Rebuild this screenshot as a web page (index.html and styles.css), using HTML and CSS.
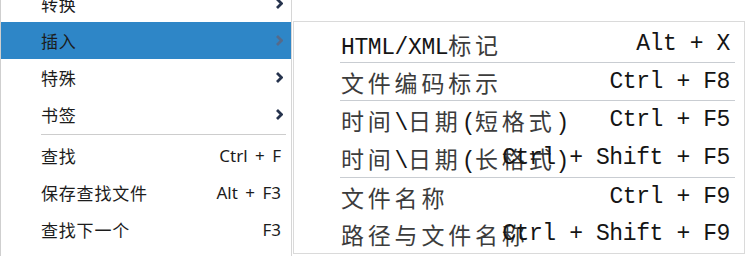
FILE: index.html
```html
<!DOCTYPE html>
<html lang="zh-CN">
<head>
    <meta charset="UTF-8">
    <title>菜单</title>
    <link rel="stylesheet" href="styles.css">
</head>
<body>

<ul class="menu">
    <li class="item">
        <span class="label"><span class="han">转换</span></span>
        <svg class="arrow" viewBox="0 0 7 11"><path d="M1 1 L5.5 5.5 L1 10"/></svg>
    </li>
    <li class="item active">
        <span class="label"><span class="han">插入</span></span>
        <svg class="arrow" viewBox="0 0 7 11"><path d="M1 1 L5.5 5.5 L1 10"/></svg>
    </li>
    <li class="item">
        <span class="label"><span class="han">特殊</span></span>
        <svg class="arrow" viewBox="0 0 7 11"><path d="M1 1 L5.5 5.5 L1 10"/></svg>
    </li>
    <li class="item">
        <span class="label"><span class="han">书签</span></span>
        <svg class="arrow" viewBox="0 0 7 11"><path d="M1 1 L5.5 5.5 L1 10"/></svg>
    </li>
    <li class="divider"></li>
    <li class="item">
        <span class="label"><span class="han">查找</span></span>
        <span class="shortcut">Ctrl + F</span>
    </li>
    <li class="item">
        <span class="label"><span class="han">保存查找文件</span></span>
        <span class="shortcut">Alt + F3</span>
    </li>
    <li class="item">
        <span class="label"><span class="han">查找下一个</span></span>
        <span class="shortcut">F3</span>
    </li>
</ul>

<!-- submenu for 插入 -->
<ul class="submenu">
    <li class="sub-item sep">
        <span class="sub-label">HTML/XML<span class="han">标记</span></span>
        <span class="sub-key">Alt + X</span>
    </li>
    <li class="sub-item sep">
        <span class="sub-label"><span class="han">文件编码标示</span></span>
        <span class="sub-key">Ctrl + F8</span>
    </li>
    <li class="sub-item">
        <span class="sub-label"><span class="han">时间</span>\<span class="han">日期</span>(<span class="han">短格式</span>)</span>
        <span class="sub-key">Ctrl + F5</span>
    </li>
    <li class="sub-item sep">
        <span class="sub-label"><span class="han">时间</span>\<span class="han">日期</span>(<span class="han">长格式</span>)</span>
        <span class="sub-key">Ctrl + Shift + F5</span>
    </li>
    <li class="sub-item">
        <span class="sub-label"><span class="han">文件名称</span></span>
        <span class="sub-key">Ctrl + F9</span>
    </li>
    <li class="sub-item">
        <span class="sub-label"><span class="han">路径与文件名称</span></span>
        <span class="sub-key">Ctrl + Shift + F9</span>
    </li>
</ul>

</body>
</html>
```

FILE: styles.css
```css
/* menu styles */
body {
    margin: 0;
    width: 748px;
    height: 256px;
    overflow: hidden;
    position: relative;
    background-color: #fff;
}

ul {
    list-style: none;
    margin: 0;
    padding: 0;
}

.menu {
    width: 290px;
    height: 280px;
    margin-top: -15px;
    border-left: 1px solid #cfcfcf;
    border-right: 1px solid #d6d6d6;
    font-family: "Noto Sans", "Noto Sans CJK SC", sans-serif;
    font-size: 17px;
    color: #1c1c1c;
}

.menu .item {
    display: flex;
    align-items: center;
    justify-content: space-between;
    height: 37px;
    padding: 0 8px 0 40px;
}

.menu .han {
    letter-spacing: 0.8px;
}

.menu .item.active {
    background-color: #2e86c7;
}

.menu .arrow {
    width: 7px;
    height: 11px;
    fill: none;
    stroke: #26334d;
    stroke-width: 2.8;
}

.menu .item.active .arrow {
    stroke: #566a8a;
}

.menu .shortcut {
    margin-right: 2px;
    word-spacing: 3px;
}

.menu .divider {
    height: 1px;
    margin: 1px 5px 2px 40px;
    background-color: #cdcdcd;
}

.submenu {
    position: absolute;
    left: 293px;
    top: 21px;
    width: 450px;
    height: 228px;
    padding-top: 3px;
    border: 1px solid #dadada;
    background-color: #fff;
    font-family: "Liberation Mono", "Noto Sans CJK SC", monospace;
    font-size: 23px;
    letter-spacing: -0.4px;
    color: #151515;
}

.sub-item {
    display: grid;
    align-items: center;
    height: 37px;
    margin: 0 9px 0 46px;
}

.sub-item > span {
    grid-area: 1 / 1;
    white-space: nowrap;
}

.sub-item.sep {
    border-bottom: 1px solid #c9cdd2;
}

.sub-item:nth-child(4) {
    height: 39px;
}

.sub-label {
    padding-left: 1px;
}

.sub-label .han {
    letter-spacing: 3.8px;
    color: #3c3c3c;
}

.sub-key {
    justify-self: end;
    padding-right: 5px;
}
```
